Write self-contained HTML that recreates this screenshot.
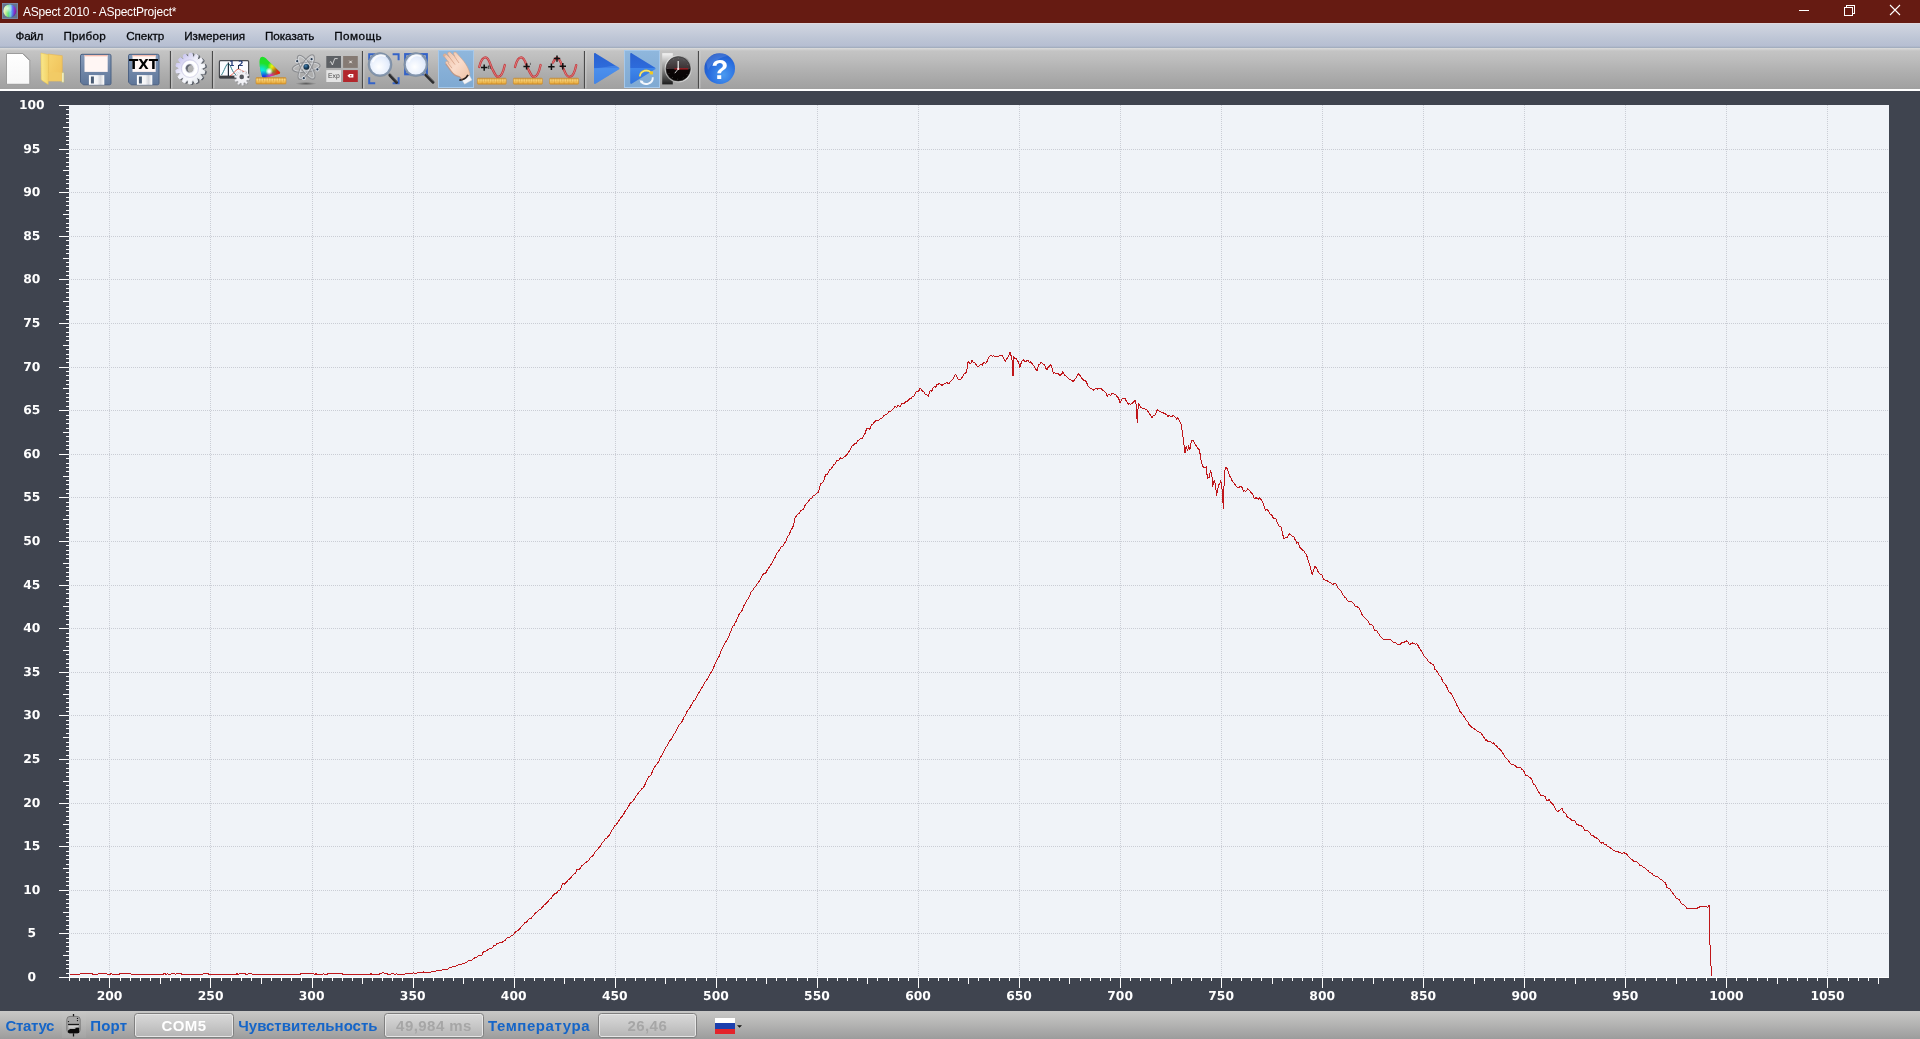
<!DOCTYPE html><html lang="ru"><head><meta charset="utf-8"><title>ASpect 2010 - ASpectProject*</title><style>
html,body{margin:0;padding:0;}
body{width:1920px;height:1039px;overflow:hidden;background:#3f444f;position:relative;font-family:"Liberation Sans",sans-serif;}
#title{position:absolute;left:0;top:0;width:1920px;height:23px;background:#661b12;}
#title .cap{position:absolute;left:23px;top:5px;font-size:12px;line-height:15px;color:#fff;white-space:nowrap;letter-spacing:-0.22px;}
#appicon{position:absolute;left:2px;top:3px;}
.wbtn{position:absolute;top:0;}
#menu{position:absolute;left:0;top:23px;width:1920px;height:25px;background:linear-gradient(#e6dadd 0,#d0d4e0 1.5px,#cbd0dd 6px,#bec6d6 15px,#b6bed2 23px,#a3aebf 24.5px);}
#menu span{position:absolute;top:5px;font-size:11.7px;line-height:15px;color:#06080c;white-space:nowrap;-webkit-text-stroke:0.3px #06080c;}
#toolbar{position:absolute;left:0;top:48px;width:1920px;height:41px;background:linear-gradient(#dcdcdc 0,#d2d2d2 1.2px,#c4c4c4 3px,#bcbcbc 12px,#adadad 26px,#a0a0a0 41px);}
#tbline{position:absolute;left:0;top:89px;width:1920px;height:2px;background:#fff;}
#toolbar svg{position:absolute;left:0;top:0;}
#chart{position:absolute;left:0;top:91px;will-change:transform;}
#title .cap,#toolbar svg,.gl{will-change:transform;}
.gl{position:absolute;left:0;top:0;width:100%;height:100%;}
#status{position:absolute;left:0;top:1011px;width:1920px;height:28px;background:linear-gradient(#c8c8c7 0%,#b7b7b6 40%,#9c9c9c 100%);}
#status .lbl{position:absolute;top:6px;font-size:15px;line-height:18px;font-weight:bold;color:#1565c8;white-space:nowrap;}
#status .box{position:absolute;top:1.5px;height:23.5px;border:1px solid #808080;border-radius:3.5px;background:linear-gradient(#d9d9d9,#c4c4c4 60%,#b4b4b4);box-shadow:inset 0 0 0 1px #e6e6e6;text-align:center;font-size:15px;line-height:24.5px;font-weight:bold;color:#a6a6a6;white-space:nowrap;letter-spacing:0.45px;}
#status svg{position:absolute;}
</style></head><body>
<div id="title"><svg id="appicon" width="16" height="16" viewBox="0 0 16 16"><defs><linearGradient id="ai1" x1="0" y1="0" x2="1" y2="0"><stop offset="0" stop-color="#f6f4e4"/><stop offset=".18" stop-color="#c4f090"/><stop offset=".38" stop-color="#62e67c"/><stop offset=".56" stop-color="#72cfe8"/><stop offset=".74" stop-color="#5a66f0"/><stop offset=".9" stop-color="#9222c2"/><stop offset="1" stop-color="#a021a4"/></linearGradient><radialGradient id="ai2" cx=".34" cy=".3" r=".85"><stop offset="0" stop-color="#fff" stop-opacity=".75"/><stop offset=".45" stop-color="#fff" stop-opacity="0"/><stop offset=".8" stop-color="#001" stop-opacity=".1"/><stop offset="1" stop-color="#002" stop-opacity=".55"/></radialGradient></defs><rect width="16" height="16" fill="#64738f"/><rect x=".5" y=".5" width="15" height="15" fill="none" stroke="#8292aa" stroke-width="1" opacity=".7"/><circle cx="7.800" cy="7.900" r="6.500" fill="url(#ai1)"/><circle cx="7.800" cy="7.900" r="6.500" fill="url(#ai2)"/></svg><span class="cap">ASpect 2010 - ASpectProject*</span><svg class="wbtn" style="left:1780px" width="140" height="23" viewBox="1780 0 140 23" fill="none" stroke="#fff" stroke-width="1" shape-rendering="crispEdges"><path d="M1799 10.5h10"/><path d="M1844.5 7.5h8v8h-8zM1846.5 7.5v-2h8v8h-2"/><path d="M1890 5l10 10M1900 5l-10 10" shape-rendering="geometricPrecision" stroke-width="1.1"/></svg></div>
<div id="menu"><div class="gl">
<span style="left:15.6px;letter-spacing:-0.32px">Файл</span>
<span style="left:63.4px;letter-spacing:0.25px">Прибор</span>
<span style="left:126.2px;letter-spacing:-0.07px">Спектр</span>
<span style="left:184.2px;letter-spacing:0.03px">Измерения</span>
<span style="left:265px;letter-spacing:-0.06px">Показать</span>
<span style="left:334.2px;letter-spacing:0.47px">Помощь</span>
</div></div>
<div id="toolbar"><svg width="760" height="41" viewBox="0 48 760 41"><defs><linearGradient id="flp" x1="0" y1="0" x2="0" y2="1"><stop offset="0" stop-color="#8399b8"/><stop offset="1" stop-color="#5f7699"/></linearGradient><linearGradient id="shut" x1="0" y1="0" x2="1" y2="0"><stop offset="0" stop-color="#ffffff"/><stop offset="0.55" stop-color="#f4f4f6"/><stop offset="0.75" stop-color="#d4d6dc"/><stop offset="1" stop-color="#ffffff"/></linearGradient><linearGradient id="rul" x1="0" y1="0" x2="0" y2="1"><stop offset="0" stop-color="#d99a34"/><stop offset="0.3" stop-color="#f6d47c"/><stop offset="0.7" stop-color="#efb84e"/><stop offset="1" stop-color="#d6952e"/></linearGradient><linearGradient id="fold1" x1="0" y1="0" x2="1" y2="0"><stop offset="0" stop-color="#f9e88c"/><stop offset="1" stop-color="#f3d267"/></linearGradient><linearGradient id="fold2" x1="0" y1="0" x2="1" y2="1"><stop offset="0" stop-color="#f7d570"/><stop offset="1" stop-color="#efbf57"/></linearGradient><linearGradient id="doc" x1="0" y1="0" x2="0" y2="1"><stop offset="0" stop-color="#ffffff"/><stop offset="1" stop-color="#f7f7f7"/></linearGradient><linearGradient id="gearg" gradientUnits="userSpaceOnUse" x1="-12" y1="-12" x2="12" y2="12"><stop offset="0" stop-color="#c3bfee"/><stop offset="0.4" stop-color="#eeeefa"/><stop offset="0.7" stop-color="#f8f9fc"/><stop offset="1" stop-color="#dfe4ea"/></linearGradient><radialGradient id="lens" cx=".45" cy=".6" r=".7"><stop offset="0" stop-color="#ffffff"/><stop offset="0.6" stop-color="#e6eefc"/><stop offset="1" stop-color="#c9d9f4"/></radialGradient><linearGradient id="play" x1="0" y1="0" x2="0" y2="1"><stop offset="0" stop-color="#2a62d0"/><stop offset="0.47" stop-color="#2d6bdb"/><stop offset="0.5" stop-color="#3f86ea"/><stop offset="1" stop-color="#3173dc"/></linearGradient><linearGradient id="sel" x1="0" y1="0" x2="0" y2="1"><stop offset="0" stop-color="#8fb7dd"/><stop offset="1" stop-color="#7fa9d2"/></linearGradient><linearGradient id="bw" x1="0" y1="0" x2="0" y2="1"><stop offset="0" stop-color="#f4f4f4"/><stop offset="0.5" stop-color="#8c8c8c"/><stop offset="1" stop-color="#1c1c1c"/></linearGradient><linearGradient id="clk" x1="0" y1="0" x2="0" y2="1"><stop offset="0" stop-color="#5a5a5c"/><stop offset="0.5" stop-color="#3a3032"/><stop offset="0.52" stop-color="#0c0607"/><stop offset="1" stop-color="#050303"/></linearGradient><linearGradient id="ring" x1="0" y1="0" x2="1" y2="1"><stop offset="0" stop-color="#ffffff"/><stop offset="0.5" stop-color="#9a9a9a"/><stop offset="1" stop-color="#f0f0f0"/></linearGradient><radialGradient id="help" cx=".62" cy=".7" r=".8"><stop offset="0" stop-color="#4a9af0"/><stop offset="0.55" stop-color="#2a6fe0"/><stop offset="1" stop-color="#1b4fc0"/></radialGradient><linearGradient id="skin" x1="0" y1="0" x2="1" y2="1"><stop offset="0" stop-color="#eec0a6"/><stop offset="0.5" stop-color="#fadccb"/><stop offset="1" stop-color="#eec2a4"/></linearGradient><radialGradient id="gC" ><stop offset="0" stop-color="#08e8f0"/><stop offset="0.35" stop-color="#08e8f0" stop-opacity="0.85"/><stop offset="1" stop-color="#08e8f0" stop-opacity="0"/></radialGradient><radialGradient id="gY" ><stop offset="0" stop-color="#f4f010"/><stop offset="0.35" stop-color="#f4f010" stop-opacity="0.85"/><stop offset="1" stop-color="#f4f010" stop-opacity="0"/></radialGradient><radialGradient id="gB" ><stop offset="0" stop-color="#1c20f0"/><stop offset="0.35" stop-color="#1c20f0" stop-opacity="0.85"/><stop offset="1" stop-color="#1c20f0" stop-opacity="0"/></radialGradient><radialGradient id="gM" ><stop offset="0" stop-color="#f010e8"/><stop offset="0.35" stop-color="#f010e8" stop-opacity="0.85"/><stop offset="1" stop-color="#f010e8" stop-opacity="0"/></radialGradient><radialGradient id="gR" ><stop offset="0" stop-color="#ff0c10"/><stop offset="0.35" stop-color="#ff0c10" stop-opacity="0.85"/><stop offset="1" stop-color="#ff0c10" stop-opacity="0"/></radialGradient><radialGradient id="gW" ><stop offset="0" stop-color="#ffffff"/><stop offset="0.35" stop-color="#ffffff" stop-opacity="0.85"/><stop offset="1" stop-color="#ffffff" stop-opacity="0"/></radialGradient><radialGradient id="nuc" cx=".4" cy=".35" r=".7"><stop offset="0" stop-color="#4a86b8"/><stop offset="0.5" stop-color="#1c4464"/><stop offset="1" stop-color="#0c2030"/></radialGradient><radialGradient id="shad" cx=".5" cy=".5" r=".5"><stop offset="0" stop-color="#000" stop-opacity="0.45"/><stop offset="1" stop-color="#000" stop-opacity="0"/></radialGradient><clipPath id="gamclip"><path d="M260.600 57.600c1.600-1.600 4.200-0.600 6.400 1.800l12.800 12.600c0.800 0.800 0.200 1.700-1 2.100l-14 3.800c-1.500 0.300-2.400-0.400-2.800-1.600c-1.800-6-3.800-15.600-1.400-18.700z"/></clipPath></defs><path d="M170.5 51v37.5" stroke="#4a4a4a" stroke-width="1.2"/><path d="M171.8 51v37.5" stroke="#d8d8d8" stroke-width="1" opacity=".8"/><path d="M212.5 51v37.5" stroke="#4a4a4a" stroke-width="1.2"/><path d="M213.8 51v37.5" stroke="#d8d8d8" stroke-width="1" opacity=".8"/><path d="M362.5 51v37.5" stroke="#4a4a4a" stroke-width="1.2"/><path d="M363.8 51v37.5" stroke="#d8d8d8" stroke-width="1" opacity=".8"/><path d="M584.5 51v37.5" stroke="#4a4a4a" stroke-width="1.2"/><path d="M585.8 51v37.5" stroke="#d8d8d8" stroke-width="1" opacity=".8"/><path d="M698.5 51v37.5" stroke="#4a4a4a" stroke-width="1.2"/><path d="M699.8 51v37.5" stroke="#d8d8d8" stroke-width="1" opacity=".8"/><rect x="438.5" y="50.5" width="35" height="37" fill="url(#sel)" stroke="#a6c8ea" stroke-width="1"/><rect x="624.5" y="50.5" width="35" height="37" fill="url(#sel)" stroke="#a6c8ea" stroke-width="1"/><path d="M6.5 53.5h16.3l7 7v23.8h-23.3z" fill="url(#doc)" stroke="#9c9c9c" stroke-width="1"/><path d="M22.8 53.5l7 7" fill="none" stroke="#8a8a8a" stroke-width=".8"/><path d="M48.2 54.100l14.100 1.600v25.200h-14.100z" fill="url(#fold2)" stroke="#e2ae4a" stroke-width=".5"/><path d="M61.800 72.600h2.100v9.700h-2.100z" fill="#f6f3cc" stroke="#b9b86a" stroke-width=".4"/><path d="M40.900 53l7.800 1.700-0.500 29.700-6.200-4c-0.500-0.400-0.800-0.800-0.800-1.600z" fill="url(#fold1)" stroke="#e6c050" stroke-width=".5"/><path d="M48.600 73c3-1.400 9-1.400 13.200-0.400v8.600h-13.400z" fill="#f2cb66" opacity=".9"/><path d="M82.0 54.3h27.5a1.5 1.5 0 0 1 1.5 1.5v27.5a1.5 1.5 0 0 1-1.5 1.5h-26.300l-2.700-2.700v-26.300a1.5 1.5 0 0 1 1.5-1.5z" fill="url(#flp)" stroke="#4d6283" stroke-width="1"/><rect x="84.5" y="55.099999999999994" width="23.2" height="16.8" fill="#fff6f4"/><rect x="84.5" y="55.099999999999994" width="23.2" height="1.2" fill="#f5b7a8"/><rect x="88.9" y="75.1" width="15.400" height="9.700" fill="url(#shut)"/><rect x="90.9" y="76.5" width="3" height="7" fill="#4a5c74"/><path d="M130.0 54.3h27.5a1.5 1.5 0 0 1 1.5 1.5v27.5a1.5 1.5 0 0 1-1.5 1.5h-26.300l-2.700-2.700v-26.300a1.5 1.5 0 0 1 1.5-1.5z" fill="url(#flp)" stroke="#4d6283" stroke-width="1"/><rect x="132.5" y="55.099999999999994" width="23.2" height="16.8" fill="#fff6f4"/><rect x="132.5" y="55.099999999999994" width="23.2" height="1.2" fill="#f5b7a8"/><rect x="136.9" y="75.1" width="15.400" height="9.700" fill="url(#shut)"/><rect x="138.9" y="76.5" width="3" height="7" fill="#4a5c74"/><text x="143.6" y="68.6" text-anchor="middle" font-family="'DejaVu Sans','Liberation Sans',sans-serif" font-weight="bold" font-size="13.6" fill="#000">TXT</text><g transform="translate(190.400 68.600)"><g transform="translate(1.500 0.500)"><path d="M11.28 0.73L14.44 2.46L13.79 5.13L10.24 5.05L9.86 5.81L12.00 8.81L10.31 10.92L7.14 9.23L6.49 9.74L7.18 13.42L4.79 14.55L2.63 11.57L1.83 11.74L0.94 15.37L-1.68 15.30L-2.40 11.63L-3.19 11.42L-5.49 14.27L-7.82 13.01L-6.96 9.38L-7.58 8.83L-10.83 10.35L-12.41 8.15L-10.13 5.27L-10.47 4.49L-14.03 4.38L-14.54 1.68L-11.30 0.12L-11.28 -0.73L-14.44 -2.46L-13.79 -5.13L-10.24 -5.05L-9.86 -5.81L-12.00 -8.81L-10.31 -10.92L-7.14 -9.23L-6.49 -9.74L-7.18 -13.42L-4.79 -14.55L-2.63 -11.57L-1.83 -11.74L-0.94 -15.37L1.68 -15.30L2.40 -11.63L3.19 -11.42L5.49 -14.27L7.82 -13.01L6.96 -9.38L7.58 -8.83L10.83 -10.35L12.41 -8.15L10.13 -5.27L10.47 -4.49L14.03 -4.38L14.54 -1.68L11.30 -0.12ZM3.800 0a4.300 4.500 0 1 0 -8.600 0a4.300 4.500 0 1 0 8.600 0z" fill="#4f5560" stroke="#4f5560" stroke-width="1" stroke-linejoin="round" fill-rule="evenodd" opacity=".85"/></g><path d="M11.28 0.73L14.44 2.46L13.79 5.13L10.24 5.05L9.86 5.81L12.00 8.81L10.31 10.92L7.14 9.23L6.49 9.74L7.18 13.42L4.79 14.55L2.63 11.57L1.83 11.74L0.94 15.37L-1.68 15.30L-2.40 11.63L-3.19 11.42L-5.49 14.27L-7.82 13.01L-6.96 9.38L-7.58 8.83L-10.83 10.35L-12.41 8.15L-10.13 5.27L-10.47 4.49L-14.03 4.38L-14.54 1.68L-11.30 0.12L-11.28 -0.73L-14.44 -2.46L-13.79 -5.13L-10.24 -5.05L-9.86 -5.81L-12.00 -8.81L-10.31 -10.92L-7.14 -9.23L-6.49 -9.74L-7.18 -13.42L-4.79 -14.55L-2.63 -11.57L-1.83 -11.74L-0.94 -15.37L1.68 -15.30L2.40 -11.63L3.19 -11.42L5.49 -14.27L7.82 -13.01L6.96 -9.38L7.58 -8.83L10.83 -10.35L12.41 -8.15L10.13 -5.27L10.47 -4.49L14.03 -4.38L14.54 -1.68L11.30 -0.12ZM3.800 0a4.300 4.500 0 1 0 -8.600 0a4.300 4.500 0 1 0 8.600 0z" fill="url(#gearg)" stroke="url(#gearg)" stroke-width="1" stroke-linejoin="round" fill-rule="evenodd"/><ellipse cx="-0.500" cy="0" rx="6.300" ry="6.600" fill="none" stroke="#ffffff" stroke-width="2.600" opacity=".95"/><ellipse cx="-0.500" cy="0" rx="8.600" ry="8.900" fill="none" stroke="#b9b7d6" stroke-width=".8" opacity=".6"/><path d="M-4.800 0a4.300 4.500 0 0 1 6.400-3.900a5.200 5.200 0 0 0 -5.400 6.200z" fill="#5d616c" opacity=".8"/></g><rect x="219.400" y="60.700" width="29.200" height="17.400" rx="1" fill="#fbfbff" stroke="#484a50" stroke-width="1.200"/><path d="M219.400 76.800h29.200" stroke="#3c3e42" stroke-width="2.400"/><path d="M221.5 75c3-4.5 4.5-11 6.8-11.4c2.4 0.4 3.6 9 7.8 11.2" fill="none" stroke="#2f8089" stroke-width="1"/><path d="M228.4 62.4v13.6" stroke="#1e2a3a" stroke-width="1.2"/><path d="M230 75.8c3.6-1 5.4-6.4 8.2-6.800c2 0 3 2.400 8 3" fill="none" stroke="#e06a5a" stroke-width="1"/><path d="M238.5 65v4" stroke="#1e2a3a" stroke-width="1"/><g font-family="'DejaVu Sans',sans-serif" font-weight="bold" font-size="7.4" fill="#253c78"><text x="229.3" y="65.6">1</text><text x="238.3" y="65.6">2</text></g><path d="M248.00 78.62L250.17 79.22L249.82 80.97L247.58 80.68L246.96 81.79L248.36 83.56L247.04 84.76L245.40 83.21L244.25 83.74L244.35 86.00L242.57 86.20L242.16 83.98L240.91 83.73L239.67 85.61L238.11 84.73L239.08 82.69L238.22 81.76L236.11 82.55L235.36 80.92L237.34 79.84L237.20 78.58L235.03 77.98L235.38 76.23L237.62 76.52L238.24 75.41L236.84 73.64L238.16 72.44L239.80 73.99L240.95 73.46L240.85 71.20L242.63 71.00L243.04 73.22L244.29 73.47L245.53 71.59L247.09 72.47L246.12 74.51L246.98 75.44L249.09 74.65L249.84 76.28L247.86 77.36Z" fill="#70737c" opacity=".5"/><path d="M247.30 77.82L249.47 78.42L249.12 80.17L246.88 79.88L246.26 80.99L247.66 82.76L246.34 83.96L244.70 82.41L243.55 82.94L243.65 85.20L241.87 85.40L241.46 83.18L240.21 82.93L238.97 84.81L237.41 83.93L238.38 81.89L237.52 80.96L235.41 81.75L234.66 80.12L236.64 79.04L236.50 77.78L234.33 77.18L234.68 75.43L236.92 75.72L237.54 74.61L236.14 72.84L237.46 71.64L239.10 73.19L240.25 72.66L240.15 70.40L241.93 70.20L242.34 72.42L243.59 72.67L244.83 70.79L246.39 71.67L245.42 73.71L246.28 74.64L248.39 73.85L249.14 75.48L247.16 76.56Z" fill="#f2f2f6" stroke="#c4c4cc" stroke-width=".4"/><circle cx="241.7" cy="76.9" r="2.3" fill="#55585f"/><g clip-path="url(#gamclip)"><rect x="258" y="55" width="24" height="24" fill="#20e028"/><circle cx="261.500" cy="72" r="9" fill="url(#gC)"/><circle cx="273" cy="66.500" r="5.500" fill="url(#gY)"/><circle cx="263.500" cy="79" r="8.500" fill="url(#gB)"/><circle cx="271.500" cy="77.500" r="6.500" fill="url(#gM)"/><circle cx="281" cy="73.500" r="11.500" fill="url(#gR)"/><circle cx="269.200" cy="71.200" r="3.800" fill="url(#gW)"/></g><rect x="256" y="77.6" width="30" height="6.4" rx="0.8" fill="url(#rul)" stroke="#c98a2a" stroke-width="0.6"/><path d="M258.5 77.89999999999999v3.5M261.0 77.89999999999999v5.8M263.5 77.89999999999999v3.5M266.0 77.89999999999999v5.8M268.5 77.89999999999999v3.5M271.0 77.89999999999999v5.8M273.5 77.89999999999999v3.5M276.0 77.89999999999999v5.8M278.5 77.89999999999999v3.5M281.0 77.89999999999999v5.8M283.5 77.89999999999999v3.5" stroke="#c07c20" stroke-width="0.6" opacity=".55"/><ellipse cx="306" cy="83.6" rx="10.5" ry="1.7" fill="url(#shad)"/><ellipse cx="306.2" cy="67.2" rx="14" ry="4.9" transform="rotate(-8 306.2 67.2)" fill="none" stroke="#8a8c90" stroke-width="1.050"/><ellipse cx="306.2" cy="67.2" rx="12.7" ry="3.7" transform="rotate(-8 306.2 67.2)" fill="none" stroke="#e2e6ec" stroke-width=".7" opacity=".75"/><ellipse cx="306.2" cy="67.2" rx="14" ry="4.9" transform="rotate(56 306.2 67.2)" fill="none" stroke="#8c8e92" stroke-width="1.050"/><ellipse cx="306.2" cy="67.2" rx="12.7" ry="3.7" transform="rotate(56 306.2 67.2)" fill="none" stroke="#e2e6ec" stroke-width=".7" opacity=".75"/><ellipse cx="306.2" cy="67.2" rx="14" ry="4.9" transform="rotate(-60 306.2 67.2)" fill="none" stroke="#8e8f92" stroke-width="1.050"/><ellipse cx="306.2" cy="67.2" rx="12.7" ry="3.7" transform="rotate(-60 306.2 67.2)" fill="none" stroke="#e2e6ec" stroke-width=".7" opacity=".75"/><circle cx="297.2" cy="61.2" r="2" fill="#e4eaf2" opacity=".75"/><circle cx="297.2" cy="61.2" r="1.100" fill="#2a3c50"/><circle cx="311.6" cy="59.2" r="2" fill="#e4eaf2" opacity=".75"/><circle cx="311.6" cy="59.2" r="1.100" fill="#2a3c50"/><circle cx="317.4" cy="69.4" r="2" fill="#e4eaf2" opacity=".75"/><circle cx="317.4" cy="69.4" r="1.100" fill="#2a3c50"/><circle cx="303.8" cy="78.2" r="2" fill="#e4eaf2" opacity=".75"/><circle cx="303.8" cy="78.2" r="1.100" fill="#2a3c50"/><circle cx="306.400" cy="66.800" r="2.900" fill="url(#nuc)"/><rect x="326.3" y="56" width="14.7" height="11.9" fill="#5d6064"/><rect x="343.1" y="56" width="14.7" height="11.9" fill="#857a73"/><rect x="326.3" y="70.1" width="14.7" height="11.9" fill="#e4e4e4"/><rect x="343.1" y="70.1" width="14.7" height="11.9" fill="#b2272c"/><path d="M329.800 62.200l1.100-0.600 1.500 3.400 2.300-6.400h3" fill="none" stroke="#dcdcdc" stroke-width=".9"/><path d="M349.300 60.700l2.500 2.500M351.800 60.700l-2.500 2.500" stroke="#f4f0ec" stroke-width="1"/><text x="333.900" y="78.200" text-anchor="middle" font-family="'Liberation Sans',sans-serif" font-size="6.800" fill="#484848" text-rendering="geometricPrecision">Exp</text><path d="M347.400 75.800l1.800-1.700h4.200v3.400h-4.200z" fill="#fff"/><circle cx="350.800" cy="75.800" r=".8" fill="#b2272c"/><path d="M375.2 54.2H369.2V60.2M392.6 54.2H398.6V60.2M375.2 83.2H369.2V77.2M392.6 83.2H398.6V77.2" fill="none" stroke="#3463c8" stroke-width="2"/><path d="M387.8 73.0L389.9 75.2" stroke="#9aa3ad" stroke-width="2.4" stroke-linecap="butt"/><path d="M389.9 75.2L396.6 82.4" stroke="#2d2d2f" stroke-width="3" stroke-linecap="round"/><path d="M390.7 74.6L397.2 81.6" stroke="#6a6a6c" stroke-width="0.8" stroke-linecap="round"/><circle cx="380" cy="64.6" r="11" fill="url(#lens)" stroke="#8496ae" stroke-width="2"/><circle cx="380" cy="64.6" r="12" fill="none" stroke="#6d7f96" stroke-width="0.6" opacity=".7"/><path d="M373 61.599999999999994a8.5 8.5 0 0 1 12-5.5" stroke="#fff" stroke-width="2" fill="none" opacity=".8" stroke-linecap="round"/><rect x="405.200" y="54.200" width="21.600" height="20" fill="none" stroke="#3463c8" stroke-width="2.200"/><path d="M423.8 72.8L425.9 75.0" stroke="#9aa3ad" stroke-width="2.4" stroke-linecap="butt"/><path d="M425.9 75.0L433.0 82.2" stroke="#2d2d2f" stroke-width="3" stroke-linecap="round"/><path d="M426.7 74.4L433.6 81.4" stroke="#6a6a6c" stroke-width="0.8" stroke-linecap="round"/><circle cx="415.8" cy="64.6" r="11" fill="url(#lens)" stroke="#8496ae" stroke-width="2"/><circle cx="415.8" cy="64.6" r="12" fill="none" stroke="#6d7f96" stroke-width="0.6" opacity=".7"/><path d="M408.8 61.599999999999994a8.5 8.5 0 0 1 12-5.5" stroke="#fff" stroke-width="2" fill="none" opacity=".8" stroke-linecap="round"/><path d="M461.600 79.400l7.400-4.800 3 5.400-7.400 4.200z" fill="#f4f4f6" stroke="#c4c8d0" stroke-width=".4"/><path d="M443.600 56.400c-1-1.800 0.800-3.400 2.400-2.200l3.800 3.400-2-3.400c-0.800-1.800 1.200-3 2.600-1.800l4.600 4.400-1.400-2.800c-0.600-1.600 1.400-2.600 2.600-1.400l5 5.600c3.400 3.800 6 7.600 7.600 11.800l1.200 4c-1.600 2.800-4.600 4.800-7.800 5.200l-2.800-2.800c-3.400-0.600-6-2.400-8-5.200l-5.600-7.800c-0.800-1.400 0.600-2.600 1.800-1.800l1.600 1.200-5-6.200c-0.800-1.400 0.400-2.400 1.600-1.800z" fill="url(#skin)" stroke="#cf9c7e" stroke-width=".5"/><path d="M449.800 57.600l5.200 7M454.800 57l4.200 6M447.800 62.800l4.200 5.400" fill="none" stroke="#c98f72" stroke-width=".7" opacity=".85"/><path d="M459.400 80.200c3.400-0.200 6.800-2.200 8.600-5.400" fill="none" stroke="#2a211d" stroke-width="1.700"/><path d="M445.800 63.800l5.600 7.800c2 2.800 4.600 4.600 8 5.200l2.800 2.800" fill="none" stroke="#c48a70" stroke-width="1.200" opacity=".55"/><path d="M479.2 67c1.536 -6 3.5840000000000005 -9.6 6.144 -9.6c4.096 0 5.120000000000001 9 7.68 13c1.7920000000000003 3.4 3.072 6.6 5.120000000000001 6.6c3.072 0 5.120000000000001 -5 6.656000000000001 -12" fill="none" stroke="#c23438" stroke-width="2.300" stroke-linecap="round"/><path d="M479.2 67c1.536 -6 3.5840000000000005 -9.6 6.144 -9.6c4.096 0 5.120000000000001 9 7.68 13c1.7920000000000003 3.4 3.072 6.6 5.120000000000001 6.6c3.072 0 5.120000000000001 -5 6.656000000000001 -12" fill="none" stroke="#eb9c9c" stroke-width=".7" stroke-linecap="round"/><path d="M515 67c1.536 -6 3.5840000000000005 -9.6 6.144 -9.6c4.096 0 5.120000000000001 9 7.68 13c1.7920000000000003 3.4 3.072 6.6 5.120000000000001 6.6c3.072 0 5.120000000000001 -5 6.656000000000001 -12" fill="none" stroke="#c23438" stroke-width="2.300" stroke-linecap="round"/><path d="M515 67c1.536 -6 3.5840000000000005 -9.6 6.144 -9.6c4.096 0 5.120000000000001 9 7.68 13c1.7920000000000003 3.4 3.072 6.6 5.120000000000001 6.6c3.072 0 5.120000000000001 -5 6.656000000000001 -12" fill="none" stroke="#eb9c9c" stroke-width=".7" stroke-linecap="round"/><path d="M553 62.6c1.6-3.6 2.600-4.600 4-4.600c3.400 0 4.600 8 7.200 12.400c1.400 3.600 2.800 6.600 5.200 6.600c3.200 0 5.400-5 6.800-11.800" fill="none" stroke="#c23438" stroke-width="2.300" stroke-linecap="round"/><path d="M553 62.6c1.6-3.6 2.600-4.600 4-4.600c3.400 0 4.600 8 7.200 12.400c1.400 3.600 2.800 6.600 5.200 6.600c3.200 0 5.400-5 6.800-11.800" fill="none" stroke="#eb9c9c" stroke-width=".7" stroke-linecap="round"/><rect x="477.4" y="78.2" width="28.80000000000001" height="6" rx="0.8" fill="url(#rul)" stroke="#c98a2a" stroke-width="0.6"/><path d="M479.8 78.5v3.3M482.2 78.5v5.4M484.6 78.5v3.3M487.0 78.5v5.4M489.4 78.5v3.3M491.8 78.5v5.4M494.2 78.5v3.3M496.6 78.5v5.4M499.0 78.5v3.3M501.4 78.5v5.4M503.8 78.5v3.3" stroke="#c07c20" stroke-width="0.6" opacity=".55"/><rect x="513.4" y="78.2" width="29.0" height="6" rx="0.8" fill="url(#rul)" stroke="#c98a2a" stroke-width="0.6"/><path d="M515.8 78.5v3.3M518.2 78.5v5.4M520.6 78.5v3.3M523.1 78.5v5.4M525.5 78.5v3.3M527.9 78.5v5.4M530.3 78.5v3.3M532.7 78.5v5.4M535.1 78.5v3.3M537.6 78.5v5.4M540.0 78.5v3.3" stroke="#c07c20" stroke-width="0.6" opacity=".55"/><rect x="549.6" y="78.2" width="29.0" height="6" rx="0.8" fill="url(#rul)" stroke="#c98a2a" stroke-width="0.6"/><path d="M552.0 78.5v3.3M554.4 78.5v5.4M556.9 78.5v3.3M559.3 78.5v5.4M561.7 78.5v3.3M564.1 78.5v5.4M566.5 78.5v3.3M568.9 78.5v5.4M571.4 78.5v3.3M573.8 78.5v5.4M576.2 78.5v3.3" stroke="#c07c20" stroke-width="0.6" opacity=".55"/><path d="M481.0 67.6h6.4M484.2 64.39999999999999v6.4" stroke="#111" stroke-width="1.5" fill="none"/><path d="M488.400 69v-3.400M488.400 66.400c1-0.800 1.800-0.400 1.800 0.600v2" stroke="#222" stroke-width=".7" fill="none"/><path d="M523.4 66.4h6.4M526.6 63.2v6.4" stroke="#111" stroke-width="1.5" fill="none"/><path d="M530.4 62.800v2.200" stroke="#333" stroke-width=".6"/><path d="M548.1999999999999 66.8h6.4M551.4 63.599999999999994v6.4" stroke="#111" stroke-width="1.5" fill="none"/><path d="M553.8 58.6h6.4M557 55.4v6.4" stroke="#111" stroke-width="1.5" fill="none"/><path d="M559.5999999999999 66.2h6.4M562.8 63.0v6.4" stroke="#111" stroke-width="1.5" fill="none"/><path d="M594 54.400c0-1.200 0.800-1.600 1.800-1l22.800 14c1 0.600 1 1.600 0 2.200l-22.800 14c-1 0.600-1.800 0.200-1.800-1z" fill="url(#play)"/><path d="M594 68.600c8-0.600 16-2.800 22.800-2.800l1.800 1.600c1 0.600 1 1.600 0 2.200l-22.800 14c-1 0.600-1.800 0.200-1.800-1z" fill="#5a9cf0" opacity=".45"/><path d="M630.200 54.400c0-1.200 0.800-1.600 1.800-1l22.800 14c1 0.600 1 1.600 0 2.200l-22.800 14c-1 0.600-1.800 0.200-1.800-1z" fill="url(#play)"/><path d="M639.800 76.400a6.500 6.500 0 0 1 11.600-3.400" fill="none" stroke="#f0d030" stroke-width="1.9"/><path d="M639.800 76.400a6.500 6.500 0 0 1 11.600-3.400" fill="none" stroke="#fdf6c0" stroke-width=".6"/><rect x="650" y="71.400" width="3" height="3" fill="#f2c81e"/><path d="M652.800 77.200a6.500 6.500 0 0 1-11.800 4" fill="none" stroke="#f2f6fc" stroke-width="1.9"/><path d="M639.600 80.200l1.400 3.400 2.600-2.600z" fill="#f2f6fc"/><rect x="662.2" y="53.2" width="10.600" height="31.200" fill="url(#bw)"/><circle cx="678.2" cy="68.800" r="13.600" fill="url(#ring)"/><circle cx="678.2" cy="68.800" r="12.200" fill="url(#clk)" stroke="#222" stroke-width=".5"/><circle cx="678.2" cy="68.800" r="10.400" fill="none" stroke="#8a8a8a" stroke-width=".9" stroke-dasharray=".5 4.950" opacity=".8"/><path d="M678.2 69V61" stroke="#f4f4f4" stroke-width="1.2"/><path d="M678.2 69l-3.400 4.200" stroke="#e8e8e8" stroke-width=".9"/><path d="M674.400 68.900H688" stroke="#b01c22" stroke-width="1.2"/><circle cx="678.2" cy="68.900" r="1.100" fill="#f6dcdc"/><circle cx="719.7" cy="68.600" r="15.300" fill="url(#help)"/><path d="M706 62a15 15 0 0 1 22-6c-8 1-16 6-20 14z" fill="#fff" opacity=".12"/><text x="719.900" y="79.200" text-anchor="middle" font-family="'Liberation Sans',sans-serif" font-weight="bold" font-size="28" fill="#fff">?</text></svg></div><div id="tbline"></div>
<svg id="chart" width="1920" height="920" viewBox="0 91 1920 920" shape-rendering="crispEdges">
<rect x="0" y="91" width="1920" height="920" fill="#3f444f"/>
<rect x="69" y="105" width="1820" height="872" fill="#f0f3f8"/>
<path d="M109.5 105V977M210.5 105V977M312.5 105V977M413.5 105V977M514.5 105V977M615.5 105V977M716.5 105V977M817.5 105V977M918.5 105V977M1019.5 105V977M1120.5 105V977M1221.5 105V977M1322.5 105V977M1423.5 105V977M1524.5 105V977M1625.5 105V977M1726.5 105V977M1827.5 105V977M69 933.5H1888M69 890.5H1888M69 846.5H1888M69 803.5H1888M69 759.5H1888M69 715.5H1888M69 672.5H1888M69 628.5H1888M69 585.5H1888M69 541.5H1888M69 497.5H1888M69 454.5H1888M69 410.5H1888M69 367.5H1888M69 323.5H1888M69 279.5H1888M69 236.5H1888M69 192.5H1888M69 149.5H1888" stroke="#cacdd5" stroke-width="1" stroke-dasharray="1 1" fill="none"/>
<path d="M59 977.5H69M66 973.5H69M66 968.5H69M66 964.5H69M66 960.5H69M63 955.5H69M66 951.5H69M66 946.5H69M66 942.5H69M66 938.5H69M59 933.5H69M66 929.5H69M66 925.5H69M66 920.5H69M66 916.5H69M63 912.5H69M66 907.5H69M66 903.5H69M66 899.5H69M66 894.5H69M59 890.5H69M66 885.5H69M66 881.5H69M66 877.5H69M66 872.5H69M63 868.5H69M66 864.5H69M66 859.5H69M66 855.5H69M66 851.5H69M59 846.5H69M66 842.5H69M66 837.5H69M66 833.5H69M66 829.5H69M63 824.5H69M66 820.5H69M66 816.5H69M66 811.5H69M66 807.5H69M59 803.5H69M66 798.5H69M66 794.5H69M66 790.5H69M66 785.5H69M63 781.5H69M66 776.5H69M66 772.5H69M66 768.5H69M66 763.5H69M59 759.5H69M66 755.5H69M66 750.5H69M66 746.5H69M66 742.5H69M63 737.5H69M66 733.5H69M66 728.5H69M66 724.5H69M66 720.5H69M59 715.5H69M66 711.5H69M66 707.5H69M66 702.5H69M66 698.5H69M63 694.5H69M66 689.5H69M66 685.5H69M66 681.5H69M66 676.5H69M59 672.5H69M66 667.5H69M66 663.5H69M66 659.5H69M66 654.5H69M63 650.5H69M66 646.5H69M66 641.5H69M66 637.5H69M66 633.5H69M59 628.5H69M66 624.5H69M66 619.5H69M66 615.5H69M66 611.5H69M63 606.5H69M66 602.5H69M66 598.5H69M66 593.5H69M66 589.5H69M59 585.5H69M66 580.5H69M66 576.5H69M66 572.5H69M66 567.5H69M63 563.5H69M66 558.5H69M66 554.5H69M66 550.5H69M66 545.5H69M59 541.5H69M66 537.5H69M66 532.5H69M66 528.5H69M66 524.5H69M63 519.5H69M66 515.5H69M66 510.5H69M66 506.5H69M66 502.5H69M59 497.5H69M66 493.5H69M66 489.5H69M66 484.5H69M66 480.5H69M63 476.5H69M66 471.5H69M66 467.5H69M66 463.5H69M66 458.5H69M59 454.5H69M66 449.5H69M66 445.5H69M66 441.5H69M66 436.5H69M63 432.5H69M66 428.5H69M66 423.5H69M66 419.5H69M66 415.5H69M59 410.5H69M66 406.5H69M66 401.5H69M66 397.5H69M66 393.5H69M63 388.5H69M66 384.5H69M66 380.5H69M66 375.5H69M66 371.5H69M59 367.5H69M66 362.5H69M66 358.5H69M66 354.5H69M66 349.5H69M63 345.5H69M66 340.5H69M66 336.5H69M66 332.5H69M66 327.5H69M59 323.5H69M66 319.5H69M66 314.5H69M66 310.5H69M66 306.5H69M63 301.5H69M66 297.5H69M66 292.5H69M66 288.5H69M66 284.5H69M59 279.5H69M66 275.5H69M66 271.5H69M66 266.5H69M66 262.5H69M63 258.5H69M66 253.5H69M66 249.5H69M66 245.5H69M66 240.5H69M59 236.5H69M66 231.5H69M66 227.5H69M66 223.5H69M66 218.5H69M63 214.5H69M66 210.5H69M66 205.5H69M66 201.5H69M66 197.5H69M59 192.5H69M66 188.5H69M66 183.5H69M66 179.5H69M66 175.5H69M63 170.5H69M66 166.5H69M66 162.5H69M66 157.5H69M66 153.5H69M59 149.5H69M66 144.5H69M66 140.5H69M66 136.5H69M66 131.5H69M63 127.5H69M66 122.5H69M66 118.5H69M66 114.5H69M66 109.5H69M59 105.5H69M69.5 977V981M79.5 977V981M89.5 977V981M99.5 977V981M109.5 977V988M120.5 977V981M130.5 977V981M140.5 977V981M150.5 977V981M160.5 977V984M170.5 977V981M180.5 977V981M190.5 977V981M200.5 977V981M210.5 977V988M221.5 977V981M231.5 977V981M241.5 977V981M251.5 977V981M261.5 977V984M271.5 977V981M281.5 977V981M291.5 977V981M301.5 977V981M312.5 977V988M322.5 977V981M332.5 977V981M342.5 977V981M352.5 977V981M362.5 977V984M372.5 977V981M382.5 977V981M392.5 977V981M402.5 977V981M413.5 977V988M423.5 977V981M433.5 977V981M443.5 977V981M453.5 977V981M463.5 977V984M473.5 977V981M483.5 977V981M493.5 977V981M504.5 977V981M514.5 977V988M524.5 977V981M534.5 977V981M544.5 977V981M554.5 977V981M564.5 977V984M574.5 977V981M584.5 977V981M594.5 977V981M605.5 977V981M615.5 977V988M625.5 977V981M635.5 977V981M645.5 977V981M655.5 977V981M665.5 977V984M675.5 977V981M685.5 977V981M696.5 977V981M706.5 977V981M716.5 977V988M726.5 977V981M736.5 977V981M746.5 977V981M756.5 977V981M766.5 977V984M776.5 977V981M786.5 977V981M797.5 977V981M807.5 977V981M817.5 977V988M827.5 977V981M837.5 977V981M847.5 977V981M857.5 977V981M867.5 977V984M877.5 977V981M888.5 977V981M898.5 977V981M908.5 977V981M918.5 977V988M928.5 977V981M938.5 977V981M948.5 977V981M958.5 977V981M968.5 977V984M978.5 977V981M989.5 977V981M999.5 977V981M1009.5 977V981M1019.5 977V988M1029.5 977V981M1039.5 977V981M1049.5 977V981M1059.5 977V981M1069.5 977V984M1080.5 977V981M1090.5 977V981M1100.5 977V981M1110.5 977V981M1120.5 977V988M1130.5 977V981M1140.5 977V981M1150.5 977V981M1160.5 977V981M1171.5 977V984M1181.5 977V981M1191.5 977V981M1201.5 977V981M1211.5 977V981M1221.5 977V988M1231.5 977V981M1241.5 977V981M1251.5 977V981M1261.5 977V981M1272.5 977V984M1282.5 977V981M1292.5 977V981M1302.5 977V981M1312.5 977V981M1322.5 977V988M1332.5 977V981M1342.5 977V981M1352.5 977V981M1363.5 977V981M1373.5 977V984M1383.5 977V981M1393.5 977V981M1403.5 977V981M1413.5 977V981M1423.5 977V988M1433.5 977V981M1443.5 977V981M1453.5 977V981M1464.5 977V981M1474.5 977V984M1484.5 977V981M1494.5 977V981M1504.5 977V981M1514.5 977V981M1524.5 977V988M1534.5 977V981M1544.5 977V981M1555.5 977V981M1565.5 977V981M1575.5 977V984M1585.5 977V981M1595.5 977V981M1605.5 977V981M1615.5 977V981M1625.5 977V988M1635.5 977V981M1645.5 977V981M1656.5 977V981M1666.5 977V981M1676.5 977V984M1686.5 977V981M1696.5 977V981M1706.5 977V981M1716.5 977V981M1726.5 977V988M1736.5 977V981M1747.5 977V981M1757.5 977V981M1767.5 977V981M1777.5 977V984M1787.5 977V981M1797.5 977V981M1807.5 977V981M1817.5 977V981M1827.5 977V988M1837.5 977V981M1848.5 977V981M1858.5 977V981M1868.5 977V981M1878.5 977V984M59 977.5H1889" stroke="#ffffff" stroke-width="1" fill="none"/>
<path d="M69.5,974.5 70.4,974.5 71.3,974.5 72.2,974.5 73.1,974.5 74.0,974.5 74.9,974.5 75.8,974.5 76.7,974.5 77.6,974.5 78.5,974.5 79.4,974.5 80.3,973.5 81.2,973.5 82.1,973.5 83.0,973.5 83.9,973.5 84.8,973.5 85.7,973.5 86.6,973.5 87.5,973.5 88.4,973.5 89.3,973.5 90.2,973.5 91.1,973.5 92.0,973.5 92.9,974.5 93.8,974.5 94.7,974.5 95.6,974.5 96.5,974.5 97.4,974.5 98.3,973.5 99.2,973.5 100.1,973.5 101.0,973.5 101.9,973.5 102.8,973.5 103.7,973.5 104.6,973.5 105.5,973.5 106.4,973.5 107.3,974.5 108.2,974.5 109.1,974.5 110.0,974.5 110.9,973.5 111.8,973.5 112.7,974.5 113.6,974.5 114.5,974.5 115.4,974.5 116.3,974.5 117.2,974.5 118.1,974.5 119.0,974.5 119.9,973.5 120.8,973.5 121.7,973.5 122.6,973.5 123.5,973.5 124.4,973.5 125.3,973.5 126.2,973.5 127.1,973.5 128.0,973.5 128.9,973.5 129.8,973.5 130.7,973.5 131.6,974.5 132.5,974.5 133.4,974.5 134.3,974.5 135.2,974.5 136.1,974.5 137.0,974.5 137.9,974.5 138.8,974.5 139.7,974.5 140.6,974.5 141.5,974.5 142.4,974.5 143.3,974.5 144.2,974.5 145.1,974.5 146.0,974.5 146.9,974.5 147.8,974.5 148.7,974.5 149.6,974.5 150.5,974.5 151.4,974.5 152.3,974.5 153.2,974.5 154.1,974.5 155.0,974.5 155.9,974.5 156.8,974.5 157.7,974.5 158.6,974.5 159.5,974.5 160.4,974.5 161.3,974.5 162.2,974.5 163.1,974.5 164.0,973.5 164.9,973.5 165.8,974.5 166.7,974.5 167.6,973.5 168.5,974.5 169.4,974.5 170.3,974.5 171.2,973.5 172.1,973.5 173.0,973.5 173.9,973.5 174.8,973.5 175.7,974.5 176.6,973.5 177.5,973.5 178.4,973.5 179.3,973.5 180.2,973.5 181.1,973.5 182.0,974.5 182.9,974.5 183.8,974.5 184.7,974.5 185.6,974.5 186.5,974.5 187.4,974.5 188.3,974.5 189.2,974.5 190.1,974.5 191.0,974.5 191.9,974.5 192.8,974.5 193.7,974.5 194.6,974.5 195.5,974.5 196.4,974.5 197.3,974.5 198.2,974.5 199.1,974.5 200.0,974.5 200.9,974.5 201.8,974.5 202.7,974.5 203.6,973.5 204.5,973.5 205.4,973.5 206.3,973.5 207.2,973.5 208.1,973.5 209.0,974.5 209.9,974.5 210.8,974.5 211.7,974.5 212.6,974.5 213.5,974.5 214.4,974.5 215.3,974.5 216.2,974.5 217.1,974.5 218.0,974.5 218.9,974.5 219.8,974.5 220.7,974.5 221.6,974.5 222.5,974.5 223.4,974.5 224.3,974.5 225.2,974.5 226.1,974.5 227.0,974.5 227.9,974.5 228.8,974.5 229.7,974.5 230.6,974.5 231.5,974.5 232.4,974.5 233.3,974.5 234.2,974.5 235.1,974.5 236.0,974.5 236.9,973.5 237.8,974.5 238.7,974.5 239.6,973.5 240.5,973.5 241.4,973.5 242.3,973.5 243.2,973.5 244.1,973.5 245.0,973.5 245.9,974.5 246.8,974.5 247.7,974.5 248.6,973.5 249.5,973.5 250.4,973.5 251.3,973.5 252.2,974.5 253.1,974.5 254.0,974.5 254.9,974.5 255.8,974.5 256.7,974.5 257.6,974.5 258.5,974.5 259.4,974.5 260.3,974.5 261.2,974.5 262.1,974.5 263.0,974.5 263.9,974.5 264.8,974.5 265.7,974.5 266.6,974.5 267.5,974.5 268.4,974.5 269.3,974.5 270.2,974.5 271.1,974.5 272.0,974.5 272.9,974.5 273.8,974.5 274.7,974.5 275.6,974.5 276.5,974.5 277.4,974.5 278.3,974.5 279.2,974.5 280.1,974.5 281.0,974.5 281.9,974.5 282.8,974.5 283.7,974.5 284.6,974.5 285.5,974.5 286.4,974.5 287.3,974.5 288.2,974.5 289.1,974.5 290.0,974.5 290.9,974.5 291.8,974.5 292.7,974.5 293.6,974.5 294.5,974.5 295.4,974.5 296.3,974.5 297.2,974.5 298.1,974.5 299.0,974.5 299.9,974.5 300.0,974.5 300.8,973.5 301.7,973.5 302.6,973.5 303.5,973.5 304.4,973.5 305.3,973.5 306.2,973.5 307.1,973.5 308.0,973.5 308.9,973.5 309.8,973.5 310.7,973.5 311.6,973.5 312.5,973.5 313.4,973.5 314.3,974.5 315.2,974.5 316.1,973.5 317.0,974.5 317.9,974.5 318.8,974.5 319.7,974.5 320.6,974.5 321.5,974.5 322.4,974.5 323.3,973.5 324.2,974.5 325.1,974.5 326.0,974.5 326.9,974.5 327.8,973.5 328.7,973.5 329.6,973.5 330.5,973.5 331.4,973.5 332.3,973.5 333.2,973.5 334.1,973.5 335.0,973.5 335.9,973.5 336.8,973.5 337.7,973.5 338.6,973.5 339.5,973.5 340.4,973.5 341.3,973.5 342.2,973.5 343.1,974.5 344.0,974.5 344.9,974.5 345.8,974.5 346.7,974.5 347.6,974.5 348.5,974.5 349.4,974.5 350.3,974.5 351.2,974.5 352.1,974.5 353.0,974.5 353.9,974.5 354.8,974.5 355.7,974.5 356.6,974.5 357.5,974.5 358.4,974.5 359.3,974.5 360.2,974.5 361.1,974.5 362.0,974.5 362.9,974.5 363.8,974.5 364.7,974.5 365.6,974.5 366.5,974.5 367.4,974.5 368.3,974.5 369.2,974.5 370.1,974.5 371.0,973.5 371.9,974.5 372.8,974.3 373.7,974.8 374.6,974.8 375.0,974.5 375.5,974.3 376.4,974.4 377.3,974.1 378.2,974.1 379.1,974.2 380.0,973.8 380.9,973.4 381.0,973.5 381.8,973.2 382.7,972.8 383.6,972.6 384.0,972.9 384.5,973.2 385.4,973.1 386.3,973.2 387.2,973.8 388.0,974.2 388.1,974.2 389.0,974.5 389.9,974.5 390.8,974.2 391.7,973.8 392.6,973.4 393.5,973.9 394.4,974.5 395.3,974.2 396.2,973.9 397.1,974.0 398.0,974.4 398.9,974.3 399.8,974.2 400.0,974.5 400.7,974.6 401.6,974.4 402.5,974.3 403.4,974.5 404.3,974.3 405.2,973.9 406.1,973.6 407.0,973.7 407.9,973.8 408.8,973.8 409.7,973.8 410.6,973.9 411.5,973.9 412.4,973.6 413.3,973.0 413.6,972.6 414.2,973.0 415.1,973.3 416.0,973.1 416.9,973.0 417.8,972.7 418.7,972.4 419.6,972.5 420.5,972.8 421.4,972.6 422.3,972.1 423.2,971.9 424.1,972.2 425.0,972.6 425.9,972.4 426.8,972.1 427.7,972.5 428.6,972.6 429.5,972.4 430.0,972.3 430.4,972.2 431.3,972.0 432.2,971.6 433.1,971.4 434.0,971.5 434.9,971.6 435.8,971.2 436.7,970.6 437.6,970.7 438.5,970.8 439.4,970.5 440.3,970.4 441.2,970.4 442.1,970.1 443.0,969.7 443.9,969.7 444.8,970.0 445.7,969.9 446.3,969.5 446.6,969.3 447.5,969.1 448.4,968.8 449.3,968.0 450.2,967.5 451.1,967.4 452.0,967.0 452.9,966.8 453.8,966.8 454.7,966.5 455.6,966.1 456.5,965.7 457.4,965.3 458.3,965.0 459.2,964.5 460.1,964.2 461.0,964.3 461.9,964.0 462.8,963.5 463.7,963.3 463.7,963.6 464.6,963.1 465.5,962.7 466.4,962.3 467.3,961.5 468.2,960.8 469.1,960.6 470.0,960.8 470.9,960.7 471.8,960.0 472.7,959.0 473.6,958.4 474.5,958.0 475.4,957.5 476.3,957.3 477.2,956.7 478.1,955.7 479.0,955.1 479.9,955.2 480.8,955.8 481.7,955.6 482.6,954.0 482.9,952.7 483.5,951.9 484.4,951.9 485.3,951.6 486.2,950.9 487.1,950.4 488.0,949.4 488.9,949.0 489.8,948.6 490.7,948.0 491.6,948.1 492.5,947.6 493.4,945.9 494.3,945.2 495.2,945.4 496.1,944.7 497.0,943.7 497.9,943.3 498.8,943.0 499.7,942.7 500.2,942.8 500.6,942.9 501.5,942.8 502.4,942.2 503.3,941.3 504.2,940.8 505.1,940.3 506.0,939.0 506.9,937.9 507.8,937.6 508.7,937.6 509.6,937.2 510.5,936.4 511.4,935.6 512.3,935.4 513.2,935.0 514.1,934.0 514.3,933.4 515.0,932.7 515.9,931.8 516.8,931.0 517.7,930.3 518.6,930.0 519.5,929.4 520.4,927.9 521.3,926.7 522.2,926.1 523.1,925.1 524.0,923.7 524.9,922.8 525.8,922.5 526.7,922.0 527.6,920.9 528.5,919.6 529.4,918.8 530.3,918.8 531.2,918.4 532.1,917.2 533.0,916.1 533.9,915.0 534.8,913.7 535.7,912.9 536.6,912.3 537.5,911.7 538.4,910.5 539.3,909.6 540.2,909.7 540.7,909.6 541.1,908.6 542.0,907.5 542.9,906.8 543.8,905.5 544.7,904.4 545.6,904.0 546.5,903.2 547.4,902.3 548.3,901.2 549.2,899.8 550.1,899.1 551.0,898.4 551.9,897.0 552.8,895.9 553.7,894.7 554.6,893.9 555.5,894.0 556.4,893.3 557.3,892.2 558.0,891.4 558.2,890.7 559.1,890.1 560.0,890.0 560.9,888.3 561.8,885.4 562.7,883.6 563.6,884.0 564.5,884.2 565.4,883.1 566.3,882.1 567.2,881.2 568.1,880.0 569.0,879.3 569.9,878.8 570.8,877.8 571.7,876.4 572.6,875.2 573.5,874.3 574.4,873.6 575.3,873.5 575.3,873.8 576.2,871.3 577.1,869.3 578.0,869.2 578.9,869.3 579.8,868.9 580.7,867.8 581.6,866.0 582.5,865.2 583.4,864.7 584.3,863.8 585.2,863.1 586.1,862.3 587.0,861.6 587.9,860.9 588.8,860.1 589.7,858.8 590.6,857.4 591.5,856.7 592.4,856.0 592.6,856.1 593.3,855.4 594.2,853.6 595.1,851.9 596.0,850.7 596.9,850.0 597.8,849.0 598.7,847.8 599.6,847.0 600.5,845.8 601.4,843.9 602.3,842.4 603.2,841.9 604.1,840.7 605.0,839.1 605.9,838.9 606.8,838.4 607.7,836.7 608.6,835.7 609.5,835.3 610.4,833.5 611.3,831.2 612.2,829.9 613.1,828.9 614.0,827.1 614.9,825.7 615.7,825.2 615.8,825.4 616.7,824.0 617.6,822.9 618.5,821.6 619.4,819.8 620.3,818.3 621.2,817.6 622.1,816.6 623.0,815.0 623.9,813.7 624.8,812.0 625.7,810.5 626.6,809.4 627.5,807.8 628.4,806.4 629.2,805.1 629.3,804.7 630.2,803.2 631.1,802.5 632.0,802.2 632.9,801.3 633.8,799.9 634.7,798.8 634.7,798.7 635.6,796.8 636.5,795.4 637.4,794.5 638.3,793.1 639.2,791.9 640.1,790.9 641.0,789.7 641.9,788.8 642.8,788.2 643.7,787.1 644.6,785.5 645.5,783.5 646.4,781.4 646.5,781.0 647.3,779.4 648.2,777.6 649.1,776.6 650.0,776.2 650.9,775.2 651.8,773.0 652.7,770.7 653.6,768.9 654.5,767.4 655.4,766.0 656.3,764.6 657.2,763.6 658.1,762.6 659.0,761.0 659.2,760.4 659.9,758.4 660.8,756.5 661.7,755.8 662.6,754.3 663.5,752.0 664.4,749.9 665.3,748.1 666.2,747.1 667.1,746.1 668.0,744.3 668.9,742.1 669.8,740.5 670.7,739.8 671.6,738.9 672.5,737.3 673.4,735.2 674.3,733.6 675.2,732.8 676.1,731.1 677.0,729.3 677.9,727.5 678.8,725.3 679.7,724.1 680.6,723.2 681.5,722.2 682.4,721.0 683.3,718.8 683.7,717.2 684.2,716.6 685.1,715.7 686.0,714.0 686.9,711.7 687.8,710.2 688.7,709.7 689.6,708.5 690.5,706.4 691.4,704.8 692.3,703.5 693.2,701.2 694.1,700.4 695.0,700.1 695.9,698.3 696.8,696.1 697.7,694.6 698.6,693.4 699.5,691.6 700.4,690.2 701.3,688.7 702.2,687.1 703.1,685.7 704.0,683.7 704.9,682.2 705.8,681.1 706.7,679.8 707.6,678.7 708.5,677.4 709.4,675.3 710.3,673.4 711.2,671.9 711.2,672.3 712.1,670.8 713.0,668.8 713.9,666.9 714.8,664.7 715.7,662.8 716.6,661.1 717.5,659.0 718.4,657.5 719.3,656.0 720.2,653.4 721.1,651.1 722.0,649.0 722.9,647.0 723.8,645.2 724.7,643.6 725.6,642.0 726.5,640.8 727.4,639.5 728.3,637.4 729.2,635.2 730.1,633.0 731.0,630.8 731.9,628.3 732.8,626.3 733.7,625.4 734.3,625.1 734.6,624.1 735.5,622.2 736.4,620.9 737.3,618.7 738.2,616.3 739.1,614.3 740.0,612.8 740.9,612.1 741.8,611.1 742.7,608.7 743.6,606.3 744.5,604.7 745.4,602.9 746.3,601.1 747.2,600.1 748.1,599.0 749.0,597.4 749.9,595.3 750.8,592.7 751.7,591.1 752.6,590.7 753.0,590.0 753.5,588.4 754.4,587.4 755.3,586.6 756.2,585.6 757.1,584.2 758.0,582.7 758.9,581.7 759.8,580.6 760.7,578.8 761.6,576.4 762.5,574.8 763.4,574.2 764.3,573.5 765.2,573.2 766.0,572.7 766.1,572.2 767.0,570.5 767.9,569.3 768.8,568.0 769.7,566.3 770.6,565.1 771.5,563.8 772.4,562.3 773.3,560.8 774.2,559.0 775.1,557.3 776.0,555.4 776.9,553.4 777.8,552.2 778.7,551.1 779.6,549.5 780.5,547.7 781.4,546.5 782.3,546.4 783.2,545.7 784.1,543.9 784.8,542.8 785.0,542.8 785.9,541.4 786.8,538.5 787.7,536.2 788.6,535.8 789.5,534.0 790.4,531.5 791.3,529.7 792.2,528.3 792.5,528.2 793.1,526.3 794.0,523.4 794.4,521.0 794.9,518.4 795.8,516.7 796.7,515.6 797.6,514.3 798.5,513.9 799.4,513.0 800.3,511.3 801.2,510.2 802.1,510.1 803.0,509.8 803.9,508.4 804.8,506.4 805.0,505.6 805.7,504.4 806.6,503.3 807.5,502.4 808.4,501.5 809.3,499.9 810.2,498.9 811.1,498.9 812.0,498.1 812.9,496.3 813.8,495.5 814.7,495.5 815.6,494.5 816.5,493.2 817.4,492.5 817.5,493.0 818.3,492.1 819.2,489.5 820.1,485.6 821.0,483.2 821.9,483.0 822.8,482.4 823.7,480.4 824.6,478.1 825.2,475.8 825.5,475.0 826.4,474.9 827.3,474.2 828.2,472.5 829.1,470.6 830.0,469.6 830.9,468.9 831.8,468.0 832.7,466.4 833.6,464.7 834.5,464.3 835.4,464.0 835.8,463.0 836.3,461.5 837.2,460.3 838.1,460.4 839.0,460.3 839.9,458.5 840.8,457.8 841.7,458.7 842.6,458.4 843.5,457.3 844.4,456.8 845.3,456.4 845.5,456.1 846.2,455.2 847.1,454.5 848.0,453.4 848.9,451.8 849.8,450.1 850.7,448.7 851.6,446.7 852.5,445.4 853.4,445.2 854.3,444.3 855.1,443.3 855.2,443.5 856.1,443.4 857.0,441.9 857.9,440.1 858.8,440.0 859.7,439.5 860.6,438.1 861.5,438.1 862.4,438.3 863.3,436.8 864.2,434.7 864.7,433.9 865.1,433.3 866.0,430.6 866.9,428.5 867.8,428.5 868.7,429.0 869.6,429.3 870.5,427.7 871.4,425.2 872.3,424.2 873.2,423.8 874.1,422.5 875.0,421.3 875.9,420.8 876.3,420.7 876.8,420.4 877.7,420.2 878.6,420.6 879.5,419.6 880.4,418.2 881.3,418.6 882.2,418.1 883.1,416.7 884.0,415.5 884.9,414.9 885.8,414.6 886.7,414.1 887.6,413.9 887.8,413.3 888.5,411.9 889.4,411.6 890.3,411.9 891.2,411.1 892.1,409.8 893.0,408.8 893.9,408.0 894.8,406.6 895.7,406.6 896.6,407.2 897.4,406.4 897.5,405.7 898.4,405.5 899.3,406.3 900.2,406.2 901.1,404.7 902.0,403.5 902.9,403.2 903.8,403.8 904.7,402.9 905.6,401.6 906.5,401.6 907.4,401.3 908.3,400.4 909.2,399.5 910.1,398.3 910.9,398.0 911.0,398.5 911.9,397.1 912.8,396.3 913.7,396.4 914.6,394.7 915.5,392.6 916.4,391.9 917.3,391.9 918.2,391.4 919.1,390.2 919.6,389.0 920.0,388.2 920.9,388.8 921.8,390.1 922.7,391.3 923.6,391.6 924.5,392.5 925.4,394.6 926.3,394.7 927.2,395.0 928.1,396.5 928.2,396.6 929.0,394.0 929.9,391.1 930.8,390.9 931.7,391.1 932.6,389.4 933.5,387.2 934.4,386.4 935.3,387.1 936.2,386.3 936.9,384.5 937.1,384.5 938.0,384.3 938.9,383.7 939.8,384.0 940.7,384.6 941.6,385.1 942.5,385.2 943.4,384.2 944.3,383.6 945.2,383.5 946.1,382.7 947.0,382.6 947.9,383.4 948.8,383.2 949.4,383.1 949.7,382.7 950.6,381.1 951.5,380.6 952.4,379.8 953.3,378.4 954.2,377.0 955.1,374.8 955.2,373.9 956.0,375.3 956.9,377.1 957.8,378.8 958.7,379.6 959.1,379.5 959.6,379.5 960.5,379.6 961.4,378.7 962.3,377.1 963.2,375.6 964.1,374.2 965.0,373.4 965.9,372.7 966.8,371.7 966.8,371.2 967.7,363.4 967.7,362.5 968.6,362.0 969.5,362.8 970.4,363.8 971.3,362.8 972.0,360.4 972.2,360.2 973.1,362.2 974.0,362.7 974.9,362.8 975.8,364.2 976.7,365.5 977.6,366.3 978.3,366.7 978.5,366.5 979.4,365.7 980.3,364.8 981.2,364.6 982.1,365.0 982.2,365.2 983.0,363.4 983.9,362.2 984.8,362.8 985.7,363.1 986.6,362.4 987.5,360.3 988.4,357.7 989.3,356.4 989.9,356.4 990.2,356.0 991.1,355.2 992.0,355.9 992.9,356.2 993.8,355.7 994.7,356.2 995.6,356.7 996.5,356.5 997.4,356.6 998.3,356.5 999.2,355.9 1000.1,355.2 1001.0,355.0 1001.4,355.2 1001.9,355.3 1002.8,356.4 1003.7,358.3 1004.6,359.6 1005.3,361.2 1005.5,361.4 1006.4,359.5 1007.3,358.0 1008.2,357.1 1009.1,355.0 1010.0,352.0 1010.1,352.1 1010.9,355.3 1011.6,356.0 1011.8,357.2 1012.7,371.0 1013.0,376.4 1013.6,356.5 1013.6,357.0 1014.5,358.1 1015.4,358.3 1016.3,358.6 1017.2,360.4 1018.1,361.7 1018.7,361.4 1019.0,363.6 1019.7,368.0 1019.9,367.0 1020.8,364.2 1021.7,361.5 1022.6,360.1 1023.5,359.7 1023.6,360.4 1024.4,361.0 1025.3,361.4 1026.2,361.2 1027.1,360.5 1028.0,360.5 1028.9,361.8 1029.8,362.9 1030.3,362.4 1030.7,361.9 1031.6,362.8 1032.5,364.1 1033.4,365.5 1034.3,366.6 1035.2,368.0 1036.1,369.6 1037.0,371.1 1037.0,371.1 1037.9,367.1 1038.8,364.4 1039.7,364.2 1040.6,363.4 1040.9,362.5 1041.5,362.7 1042.4,363.6 1043.3,364.3 1044.2,364.7 1045.1,366.4 1046.0,368.4 1046.7,370.0 1046.9,369.9 1047.8,367.6 1048.7,366.5 1049.6,366.3 1050.1,364.8 1050.5,364.5 1051.4,366.3 1052.3,369.3 1053.2,372.6 1053.4,373.1 1054.1,372.7 1055.0,372.9 1055.9,373.7 1056.8,373.7 1057.7,373.3 1058.6,373.9 1059.5,375.4 1060.1,376.1 1060.4,375.3 1061.3,374.4 1062.1,373.4 1062.2,371.8 1063.1,372.2 1064.0,374.3 1064.9,375.3 1065.8,375.8 1066.7,376.5 1067.6,377.3 1068.5,378.3 1069.4,379.2 1070.3,379.9 1071.2,379.9 1072.1,380.6 1072.6,381.7 1073.0,381.5 1073.9,380.8 1074.8,379.5 1075.7,378.1 1076.6,377.1 1077.5,375.4 1078.4,373.5 1078.4,373.6 1079.3,374.7 1080.2,375.8 1081.1,377.2 1082.0,378.4 1082.9,379.5 1083.8,380.6 1084.7,380.8 1085.6,380.8 1086.1,381.7 1086.5,382.6 1087.4,384.1 1087.7,385.2 1088.3,386.3 1089.2,387.1 1090.1,387.9 1091.0,388.7 1091.9,389.1 1092.8,389.6 1093.5,390.1 1093.7,390.1 1094.6,389.3 1095.5,388.2 1096.4,388.7 1097.3,389.4 1097.3,389.0 1098.2,388.9 1099.1,389.0 1100.0,388.5 1100.9,388.6 1101.8,389.3 1102.7,390.4 1103.6,391.0 1104.1,390.9 1104.5,391.4 1105.4,392.2 1106.3,393.8 1107.0,396.4 1107.2,396.8 1108.1,395.2 1109.0,394.1 1109.9,395.0 1110.8,395.0 1111.7,393.8 1112.6,393.4 1113.5,393.7 1114.4,394.3 1115.3,394.0 1115.6,394.0 1116.2,396.0 1117.1,396.8 1118.0,397.5 1118.9,399.2 1119.8,401.3 1120.0,402.6 1120.7,401.7 1121.6,399.7 1122.5,398.8 1123.4,398.3 1124.3,398.4 1125.2,398.3 1125.2,398.5 1126.1,400.7 1127.0,402.0 1127.9,403.4 1128.8,404.8 1129.1,404.0 1129.7,403.8 1130.6,404.4 1131.5,403.9 1132.4,403.1 1133.3,402.3 1134.2,401.2 1134.9,400.2 1135.1,400.1 1136.0,403.7 1136.2,405.8 1136.9,417.3 1137.2,422.5 1137.8,413.2 1138.3,404.1 1138.7,403.7 1139.6,405.2 1140.5,407.1 1140.6,407.3 1141.4,407.9 1142.3,408.1 1143.2,408.1 1144.1,408.4 1145.0,408.9 1145.5,409.6 1145.9,409.3 1146.8,409.5 1147.7,411.2 1148.3,411.7 1148.6,411.8 1149.5,413.9 1150.4,414.9 1151.3,416.3 1152.2,417.9 1152.2,417.0 1153.1,415.6 1154.0,415.6 1154.9,415.4 1155.8,413.4 1156.7,410.9 1157.6,409.8 1158.5,410.2 1158.9,411.0 1159.4,411.4 1160.3,411.7 1161.2,412.1 1162.1,412.1 1163.0,412.7 1163.9,413.2 1164.7,413.0 1164.8,413.5 1165.7,414.3 1166.6,414.6 1167.5,416.0 1167.6,416.8 1168.4,416.3 1169.3,415.4 1170.2,415.9 1171.1,416.9 1172.0,416.4 1172.9,415.4 1173.8,415.9 1174.3,416.6 1174.7,416.4 1175.6,417.6 1176.5,419.0 1177.2,418.3 1177.4,417.3 1178.3,418.1 1179.2,420.1 1180.1,422.5 1180.5,422.3 1181.0,423.9 1181.9,429.2 1182.8,435.4 1183.0,436.9 1183.7,442.7 1184.6,450.5 1184.9,453.1 1185.5,450.0 1186.3,446.1 1186.4,446.3 1187.3,450.5 1187.4,451.0 1188.2,448.2 1188.8,445.6 1189.1,447.1 1189.7,450.0 1190.0,448.6 1190.9,443.3 1191.3,440.8 1191.8,440.6 1192.7,440.1 1193.6,440.2 1193.6,440.8 1194.5,443.2 1195.4,445.2 1195.5,444.9 1196.3,445.7 1197.2,447.6 1198.1,448.8 1199.0,449.3 1199.4,449.4 1199.9,452.7 1200.8,459.0 1201.7,464.0 1201.7,463.3 1202.6,465.6 1203.5,467.5 1203.6,467.3 1204.4,467.6 1205.3,467.4 1206.1,466.8 1206.2,467.6 1207.1,475.3 1207.5,478.6 1208.0,478.1 1208.9,477.6 1209.0,478.0 1209.8,474.2 1210.5,470.4 1210.7,471.1 1211.6,474.9 1211.9,475.2 1212.5,482.2 1212.8,486.4 1213.4,483.6 1214.3,480.2 1214.4,480.2 1215.2,484.4 1216.1,490.4 1216.7,495.2 1217.0,493.2 1217.9,488.5 1218.6,485.4 1218.8,484.7 1219.7,483.4 1220.6,481.6 1220.9,480.8 1221.5,485.9 1222.1,489.8 1222.4,493.7 1223.3,507.4 1223.4,508.5 1224.2,479.5 1224.4,472.5 1225.1,469.9 1225.9,466.9 1226.0,466.8 1226.9,468.3 1227.8,470.2 1227.9,470.6 1228.7,473.2 1229.6,476.1 1230.2,477.1 1230.5,476.9 1231.4,479.0 1232.3,481.3 1233.2,482.3 1234.0,483.0 1234.1,483.1 1235.0,484.6 1235.9,486.0 1236.8,487.0 1237.7,487.9 1237.9,487.7 1238.6,487.0 1239.5,487.0 1240.4,486.7 1240.8,486.1 1241.3,486.3 1242.2,487.9 1243.1,490.5 1243.7,491.6 1244.0,490.7 1244.9,490.9 1245.8,491.4 1246.7,490.5 1247.5,488.3 1247.6,488.1 1248.5,489.9 1249.4,490.4 1250.3,491.4 1251.2,492.9 1252.1,493.8 1253.0,495.0 1253.3,496.8 1253.9,498.1 1254.8,498.3 1255.7,497.9 1256.6,498.0 1257.5,498.8 1258.4,499.1 1259.1,498.3 1259.3,497.5 1260.2,498.4 1261.1,499.6 1261.9,501.0 1262.0,501.2 1262.9,502.6 1263.8,505.5 1264.7,508.4 1265.6,510.3 1265.8,510.1 1266.5,509.7 1267.4,509.9 1268.3,510.8 1269.2,512.7 1270.1,514.3 1270.6,514.4 1271.0,514.1 1271.9,515.3 1272.8,517.3 1273.7,518.3 1274.5,518.3 1274.6,518.3 1275.5,518.7 1276.4,519.2 1276.4,520.3 1277.3,522.4 1278.2,524.0 1278.3,525.1 1279.1,526.1 1280.0,526.0 1280.9,526.5 1281.2,527.3 1281.8,530.5 1282.7,534.2 1283.6,537.9 1283.7,538.6 1284.5,538.3 1285.4,537.8 1286.3,537.5 1287.2,537.2 1288.1,536.0 1289.0,534.6 1289.9,533.6 1289.9,533.8 1290.8,534.7 1291.7,535.7 1292.6,536.5 1293.5,536.3 1293.7,536.4 1294.4,538.6 1295.3,539.9 1296.2,541.6 1296.6,543.4 1297.1,543.1 1298.0,542.5 1298.9,544.4 1299.8,547.1 1300.7,548.2 1301.6,549.1 1302.5,550.3 1303.4,550.7 1304.3,551.5 1305.2,553.0 1306.1,554.4 1306.9,556.0 1307.0,556.4 1307.9,559.4 1308.8,562.4 1309.7,564.8 1310.6,568.2 1311.5,572.3 1312.3,575.0 1312.4,574.3 1313.3,571.1 1314.2,568.2 1315.0,566.2 1315.1,566.4 1316.0,567.6 1316.9,569.1 1317.8,571.2 1318.7,572.7 1319.6,573.6 1320.4,574.8 1320.5,574.6 1321.4,574.1 1322.3,575.3 1323.2,578.3 1324.1,579.9 1325.0,580.1 1325.9,580.4 1326.8,580.5 1327.2,580.8 1327.7,581.3 1328.6,581.7 1329.5,582.3 1330.4,582.5 1331.3,583.1 1332.2,584.3 1333.1,584.3 1334.0,583.7 1334.9,583.5 1335.2,583.0 1335.8,583.7 1336.7,585.8 1337.6,587.4 1338.5,588.2 1339.4,589.4 1340.3,590.5 1341.2,591.2 1342.1,593.1 1343.0,595.1 1343.9,596.1 1344.7,597.2 1344.8,597.2 1345.7,597.8 1346.6,599.1 1347.5,600.5 1348.4,601.2 1349.3,601.4 1350.2,601.2 1351.1,601.4 1352.0,602.0 1352.9,602.6 1353.8,603.8 1354.7,605.5 1355.6,606.4 1356.5,606.6 1357.4,607.0 1358.1,607.1 1358.3,607.3 1359.2,608.6 1360.1,610.1 1361.0,612.3 1361.9,614.2 1362.8,615.5 1363.5,616.4 1363.7,616.6 1364.6,617.7 1365.5,618.7 1366.4,619.6 1367.3,620.3 1368.2,621.6 1369.1,623.1 1370.0,624.4 1370.3,624.6 1370.9,624.6 1371.8,624.9 1372.7,625.7 1373.6,627.7 1374.5,630.0 1375.4,630.6 1376.3,630.2 1377.2,631.3 1378.1,632.9 1379.0,634.1 1379.9,635.6 1380.8,636.8 1381.7,637.8 1382.6,638.6 1383.5,639.3 1383.7,639.4 1384.4,639.9 1385.3,640.0 1386.2,639.4 1387.1,639.5 1388.0,639.9 1388.9,639.8 1389.8,639.5 1390.5,639.1 1390.7,639.5 1391.6,640.8 1392.5,641.8 1393.4,642.1 1394.3,642.2 1395.2,642.3 1396.1,642.9 1397.0,643.9 1397.2,644.1 1397.9,644.0 1398.8,644.0 1399.7,644.4 1400.6,643.9 1401.5,642.9 1402.4,642.9 1403.3,642.7 1404.2,642.1 1405.1,641.8 1406.0,641.5 1406.6,640.8 1406.9,640.8 1407.8,642.0 1408.7,643.6 1409.3,644.7 1409.6,644.7 1410.5,644.1 1411.4,643.2 1412.3,642.9 1413.2,643.5 1414.1,643.9 1415.0,644.1 1415.9,644.2 1416.1,643.6 1416.8,643.8 1417.7,644.8 1418.6,646.9 1419.5,648.4 1420.4,649.6 1421.3,650.9 1422.2,652.0 1422.8,653.4 1423.1,654.8 1424.0,655.9 1424.9,656.8 1425.8,657.8 1426.7,658.7 1427.6,660.1 1428.5,661.5 1429.4,662.2 1430.3,662.9 1431.2,663.7 1432.1,664.0 1433.0,664.2 1433.9,665.9 1434.8,668.7 1434.9,669.2 1435.7,669.6 1436.6,670.9 1437.5,672.4 1438.4,673.9 1439.3,675.6 1440.2,676.4 1441.1,676.8 1441.7,677.9 1442.0,679.5 1442.9,681.6 1443.8,682.7 1444.7,683.5 1445.6,684.8 1446.5,686.4 1447.4,688.2 1448.3,690.5 1449.2,692.2 1450.1,692.7 1451.0,693.3 1451.9,695.0 1452.5,696.2 1452.8,696.6 1453.7,698.4 1454.6,700.0 1455.5,701.5 1456.4,704.0 1457.3,706.3 1458.2,707.6 1459.1,709.6 1460.0,711.7 1460.5,712.2 1460.9,712.5 1461.8,713.5 1462.7,714.7 1463.6,715.9 1464.5,717.3 1465.4,718.9 1466.3,720.4 1467.2,721.1 1468.1,722.3 1469.0,724.5 1469.9,725.6 1470.8,726.1 1471.3,727.0 1471.7,727.5 1472.6,727.7 1473.5,728.2 1474.4,729.1 1475.3,729.7 1476.2,730.2 1477.1,730.9 1478.0,731.5 1478.9,732.1 1479.8,732.9 1480.7,732.9 1480.8,732.4 1481.6,733.8 1482.5,735.2 1483.4,736.3 1484.3,738.0 1485.2,739.7 1486.1,740.4 1486.1,739.8 1487.0,740.4 1487.9,741.2 1488.8,741.2 1489.7,741.0 1490.6,741.5 1491.5,742.8 1492.4,743.3 1493.3,742.9 1494.2,743.6 1495.1,745.1 1495.6,745.3 1496.0,745.0 1496.9,746.2 1497.8,747.7 1498.7,748.4 1499.6,749.2 1500.5,750.0 1501.4,751.0 1502.3,752.6 1503.2,753.6 1503.7,753.8 1504.1,754.9 1505.0,756.7 1505.9,757.8 1506.8,758.8 1507.7,759.8 1508.6,761.0 1509.5,762.3 1510.4,763.6 1511.3,764.2 1511.7,764.0 1512.2,764.2 1513.1,764.7 1514.0,765.1 1514.9,765.4 1515.8,766.2 1516.7,767.1 1517.6,767.5 1518.5,767.7 1519.4,768.0 1519.8,767.5 1520.3,767.4 1521.2,768.6 1522.1,769.8 1523.0,770.1 1523.9,771.2 1524.8,773.5 1525.7,775.2 1526.6,775.3 1527.5,775.1 1528.4,776.3 1529.3,777.7 1529.3,777.2 1530.2,777.5 1531.1,778.4 1531.6,778.8 1532.0,780.2 1532.9,783.1 1533.8,784.2 1534.7,784.4 1535.6,785.9 1536.5,788.1 1537.4,789.9 1538.3,791.4 1539.2,792.8 1540.1,794.3 1541.0,795.9 1541.2,795.5 1541.9,794.9 1542.8,795.2 1543.7,795.7 1544.6,796.1 1545.0,796.3 1545.5,797.8 1546.4,800.2 1546.4,800.2 1547.3,800.7 1548.2,800.6 1548.9,799.6 1549.1,799.7 1550.0,801.3 1550.9,802.5 1551.8,803.4 1552.7,804.4 1553.6,805.3 1554.5,806.7 1555.4,809.0 1556.3,810.5 1557.2,811.1 1557.5,811.5 1558.1,811.5 1559.0,810.7 1559.9,810.0 1560.8,809.3 1561.7,808.6 1562.4,808.7 1562.6,809.9 1563.5,811.9 1564.4,812.7 1565.3,813.1 1566.2,814.5 1567.1,816.6 1568.0,817.7 1568.9,818.1 1569.8,818.5 1570.7,819.2 1571.0,819.8 1571.6,820.1 1572.5,820.6 1573.4,820.8 1574.3,820.2 1574.9,820.4 1575.2,821.5 1576.1,823.3 1577.0,824.5 1577.8,824.7 1577.9,824.5 1578.8,825.3 1579.7,825.7 1580.6,825.6 1581.5,826.0 1581.6,826.3 1582.4,826.5 1583.3,827.5 1584.2,829.5 1585.1,830.7 1586.0,830.8 1586.9,830.6 1587.8,831.0 1588.7,831.7 1589.6,832.6 1590.5,834.1 1591.2,835.4 1591.4,835.3 1592.3,835.2 1593.2,835.5 1594.1,836.6 1595.0,837.5 1595.9,837.7 1596.8,838.3 1597.7,838.8 1598.6,839.1 1598.9,839.8 1599.5,841.0 1600.4,842.4 1601.3,843.1 1602.2,842.6 1603.1,842.6 1604.0,844.0 1604.9,844.7 1605.8,844.5 1606.6,844.8 1606.7,845.9 1607.6,846.8 1608.5,846.9 1609.4,847.3 1610.3,847.9 1611.2,848.4 1612.1,848.9 1613.0,849.9 1613.9,850.7 1614.8,850.8 1615.3,851.1 1615.7,851.7 1616.6,851.8 1617.5,851.6 1618.4,852.0 1619.3,852.3 1620.2,852.3 1621.1,853.0 1622.0,853.9 1622.9,853.4 1623.8,852.5 1624.0,852.4 1624.7,853.2 1625.6,853.5 1626.5,853.9 1627.4,854.9 1628.3,856.1 1629.2,857.1 1630.1,857.9 1631.0,859.0 1631.9,859.5 1632.8,860.2 1633.6,861.2 1633.7,861.3 1634.6,861.7 1635.5,861.3 1636.4,861.4 1637.3,862.4 1638.2,863.0 1639.1,864.2 1640.0,865.6 1640.9,865.9 1641.8,865.9 1642.7,866.4 1643.2,867.1 1643.6,867.3 1644.5,867.7 1645.4,868.5 1646.3,869.2 1647.2,869.9 1648.1,870.8 1649.0,871.9 1649.9,872.6 1650.8,872.8 1651.7,873.2 1652.6,874.3 1653.5,875.4 1654.4,875.8 1654.8,875.6 1655.3,876.2 1656.2,876.7 1657.1,876.6 1658.0,877.1 1658.9,878.1 1659.8,879.1 1660.7,879.4 1661.6,879.6 1662.5,880.1 1663.4,881.2 1664.3,882.7 1664.4,882.7 1665.2,882.7 1666.1,884.7 1667.0,887.4 1667.9,888.0 1668.8,888.2 1669.7,888.6 1670.2,888.9 1670.6,890.4 1671.5,891.6 1672.4,892.4 1673.3,894.1 1674.2,895.0 1675.1,896.0 1676.0,897.9 1676.0,898.0 1676.9,898.5 1677.8,899.0 1678.7,899.3 1679.6,900.4 1680.5,902.4 1681.4,903.8 1682.3,904.3 1683.2,904.7 1684.1,905.3 1685.0,905.9 1685.9,907.0 1686.8,908.4 1687.5,908.8 1687.7,908.7 1688.6,908.3 1689.5,908.4 1690.4,909.0 1691.3,908.6 1692.2,908.1 1693.1,908.1 1694.0,908.1 1694.9,908.0 1695.8,908.1 1696.7,908.5 1697.1,908.2 1697.6,907.7 1698.5,907.8 1699.4,907.1 1700.3,906.1 1701.0,906.1 1701.2,906.8 1702.1,906.9 1703.0,906.3 1703.9,906.3 1704.8,906.4 1705.7,906.3 1705.8,906.1 1706.6,906.8 1707.3,907.5 1707.5,907.3 1708.4,906.3 1709.1,905.5 1709.5,934.5 1710.5,955.5 1711.5,976.4" stroke="#c0161a" stroke-width="1" fill="none" shape-rendering="crispEdges" stroke-linejoin="round"/>
<g font-family="'DejaVu Sans', 'Liberation Sans', sans-serif" font-weight="bold" font-size="12.3" fill="#ffffff" text-rendering="geometricPrecision">
<text transform="translate(31.8 980.90)" text-anchor="middle">0</text>
<text transform="translate(31.8 937.30)" text-anchor="middle">5</text>
<text transform="translate(31.8 893.70)" text-anchor="middle">10</text>
<text transform="translate(31.8 850.10)" text-anchor="middle">15</text>
<text transform="translate(31.8 806.50)" text-anchor="middle">20</text>
<text transform="translate(31.8 762.90)" text-anchor="middle">25</text>
<text transform="translate(31.8 719.30)" text-anchor="middle">30</text>
<text transform="translate(31.8 675.70)" text-anchor="middle">35</text>
<text transform="translate(31.8 632.10)" text-anchor="middle">40</text>
<text transform="translate(31.8 588.50)" text-anchor="middle">45</text>
<text transform="translate(31.8 544.90)" text-anchor="middle">50</text>
<text transform="translate(31.8 501.30)" text-anchor="middle">55</text>
<text transform="translate(31.8 457.70)" text-anchor="middle">60</text>
<text transform="translate(31.8 414.10)" text-anchor="middle">65</text>
<text transform="translate(31.8 370.50)" text-anchor="middle">70</text>
<text transform="translate(31.8 326.90)" text-anchor="middle">75</text>
<text transform="translate(31.8 283.30)" text-anchor="middle">80</text>
<text transform="translate(31.8 239.70)" text-anchor="middle">85</text>
<text transform="translate(31.8 196.10)" text-anchor="middle">90</text>
<text transform="translate(31.8 152.50)" text-anchor="middle">95</text>
<text transform="translate(31.8 108.90)" text-anchor="middle">100</text>
<text transform="translate(109.5 999.7)" text-anchor="middle">200</text>
<text transform="translate(210.6 999.7)" text-anchor="middle">250</text>
<text transform="translate(311.6 999.7)" text-anchor="middle">300</text>
<text transform="translate(412.7 999.7)" text-anchor="middle">350</text>
<text transform="translate(513.7 999.7)" text-anchor="middle">400</text>
<text transform="translate(614.8 999.7)" text-anchor="middle">450</text>
<text transform="translate(715.9 999.7)" text-anchor="middle">500</text>
<text transform="translate(816.9 999.7)" text-anchor="middle">550</text>
<text transform="translate(918.0 999.7)" text-anchor="middle">600</text>
<text transform="translate(1019.0 999.7)" text-anchor="middle">650</text>
<text transform="translate(1120.1 999.7)" text-anchor="middle">700</text>
<text transform="translate(1221.1 999.7)" text-anchor="middle">750</text>
<text transform="translate(1322.2 999.7)" text-anchor="middle">800</text>
<text transform="translate(1423.2 999.7)" text-anchor="middle">850</text>
<text transform="translate(1524.3 999.7)" text-anchor="middle">900</text>
<text transform="translate(1625.4 999.7)" text-anchor="middle">950</text>
<text transform="translate(1726.4 999.7)" text-anchor="middle">1000</text>
<text transform="translate(1827.5 999.7)" text-anchor="middle">1050</text>
</g></svg>
<div id="status"><div class="gl"><span class="lbl" style="left:5.6px;letter-spacing:-0.36px">Статус</span><svg style="left:60px;top:0" width="30" height="28" viewBox="60 1011 30 28"><rect x="62" y="1012" width="24" height="26" fill="#d0d0d0" opacity=".12"/><path d="M73.5 1014v4M73.5 1032v4.500" stroke="#151515" stroke-width="1.300"/><rect x="66.800" y="1016.400" width="13.400" height="16.600" rx="3.200" fill="#a7a7a7" stroke="#6c6c6c" stroke-width=".8"/><path d="M68 1024.400h11" stroke="#101010" stroke-width="1.100"/><path d="M68 1030.600l2.200-1.600h4.600l1.600-1.200h2.800v4.200c0 .8-.5 1.200-1.200 1.200h-8.800c-.8 0-1.200-.4-1.200-1.200z" fill="#0a0a0a"/><path d="M68.600 1026.400h9.800M68.600 1027.800h6" stroke="#e8e8e8" stroke-width=".7"/><circle cx="77.500" cy="1018.400" r=".7" fill="#111"/><circle cx="77.500" cy="1020.600" r=".7" fill="#111"/><circle cx="68.500" cy="1021.600" r=".7" fill="#111"/></svg><span class="lbl" style="left:90.200px;letter-spacing:0.2px">Порт</span><div class="box" style="left:134.300px;width:97.400px;color:#fff">COM5</div><span class="lbl" style="left:238.300px;letter-spacing:0px">Чувствительность</span><div class="box" style="left:384.300px;width:97.400px">49,984 ms</div><span class="lbl" style="left:488px;letter-spacing:0.56px">Температура</span><div class="box" style="left:597.600px;width:97.400px">26,46</div><svg style="left:712px;top:0" width="34" height="28" viewBox="712 1011 34 28" shape-rendering="crispEdges"><rect x="715" y="1018" width="20" height="5.400" fill="#ffffff"/><rect x="715" y="1023.400" width="20" height="5.600" fill="#1c3fae"/><rect x="715" y="1029" width="20" height="5" fill="#e3242b"/><path d="M737 1025.200h5l-2.500 2.600z" fill="#111" shape-rendering="geometricPrecision"/></svg></div></div>
</body></html>
